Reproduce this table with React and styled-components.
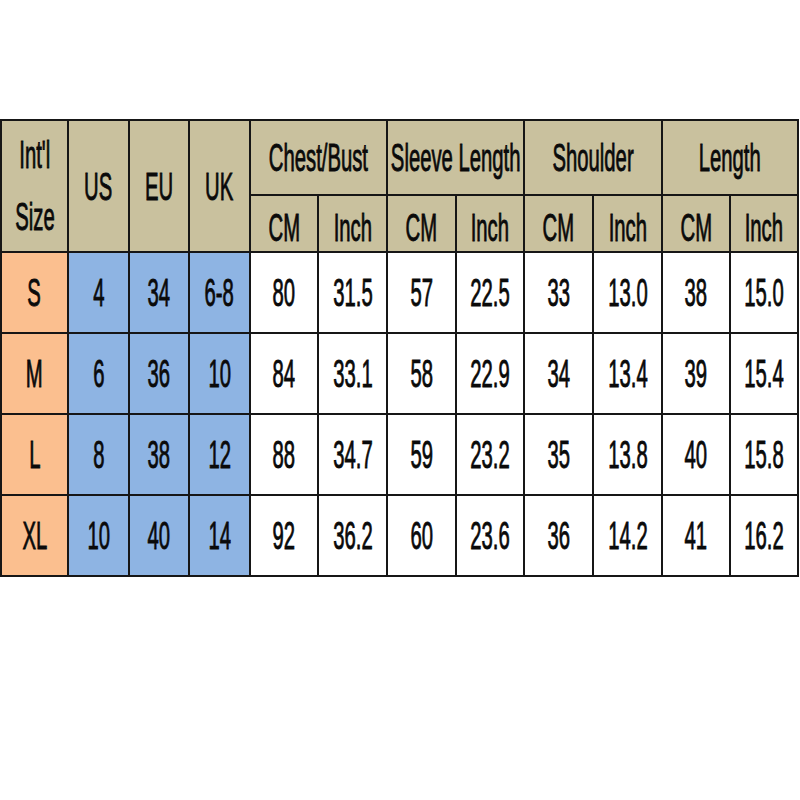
import React from 'react';
import styled, { createGlobalStyle } from 'styled-components';

const GlobalStyle = createGlobalStyle`
  html, body {
    margin: 0;
    padding: 0;
    background: #ffffff;
  }
  body {
    font-family: "Liberation Sans", Arial, sans-serif;
  }
`;

const Page = styled.div`
  width: 800px;
  height: 800px;
  padding-top: 119px;
  box-sizing: border-box;
`;

const Table = styled.div`
  display: grid;
  grid-template-columns: 65px 59px 58px 59px 66px 67px 67px 66px 67px 67px 66px 66px;
  grid-template-rows: 73px 55px 79px 79px 79px 79px;
  gap: 2px;
  padding: 2px;
  background: #161616;
  width: max-content;
`;

const colors = {
  head: '#c9c19e',
  size: '#fbbf8f',
  region: '#8eb4e3',
  data: '#ffffff',
};

const Cell = styled.div`
  background: ${(p) => colors[p.$tone || 'data']};
  grid-column: ${(p) => (p.$cols ? `span ${p.$cols}` : 'auto')};
  grid-row: ${(p) => (p.$rows ? `span ${p.$rows}` : 'auto')};
  display: flex;
  flex-direction: column;
  align-items: center;
  justify-content: center;
  padding-top: ${(p) => (p.$unit ? '7px' : '0')};
  box-sizing: border-box;
  overflow: hidden;
`;

const Label = styled.span`
  display: inline-block;
  font-size: 39px;
  line-height: ${(p) => (p.$tall ? '62px' : '1')};
  color: #0a0a0a;
  white-space: nowrap;
  transform: scaleX(0.52);
  -webkit-text-stroke: 0.9px #0a0a0a;
`;

const groups = ['Chest/Bust', 'Sleeve Length', 'Shoulder', 'Length'];

const rows = [
  ['S', '4', '34', '6-8', '80', '31.5', '57', '22.5', '33', '13.0', '38', '15.0'],
  ['M', '6', '36', '10', '84', '33.1', '58', '22.9', '34', '13.4', '39', '15.4'],
  ['L', '8', '38', '12', '88', '34.7', '59', '23.2', '35', '13.8', '40', '15.8'],
  ['XL', '10', '40', '14', '92', '36.2', '60', '23.6', '36', '14.2', '41', '16.2'],
];

const toneFor = (i) => {
  if (i === 0) return 'size';
  if (i < 4) return 'region';
  return 'data';
};

export default function App() {
  return (
    <Page>
      <GlobalStyle />
      <Table>
        <Cell $tone="head" $rows={2}>
          <Label $tall>Int'l</Label>
          <Label $tall>Size</Label>
        </Cell>
        {['US', 'EU', 'UK'].map((r) => (
          <Cell key={r} $tone="head" $rows={2}>
            <Label>{r}</Label>
          </Cell>
        ))}
        {groups.map((g) => (
          <Cell key={g} $tone="head" $cols={2}>
            <Label>{g}</Label>
          </Cell>
        ))}
        {groups.map((g) => (
          <React.Fragment key={`${g}-units`}>
            <Cell $tone="head" $unit>
              <Label>CM</Label>
            </Cell>
            <Cell $tone="head" $unit>
              <Label>Inch</Label>
            </Cell>
          </React.Fragment>
        ))}
        {rows.map((row) =>
          row.map((v, i) => (
            <Cell key={`${row[0]}-${i}`} $tone={toneFor(i)}>
              <Label>{v}</Label>
            </Cell>
          ))
        )}
      </Table>
    </Page>
  );
}
